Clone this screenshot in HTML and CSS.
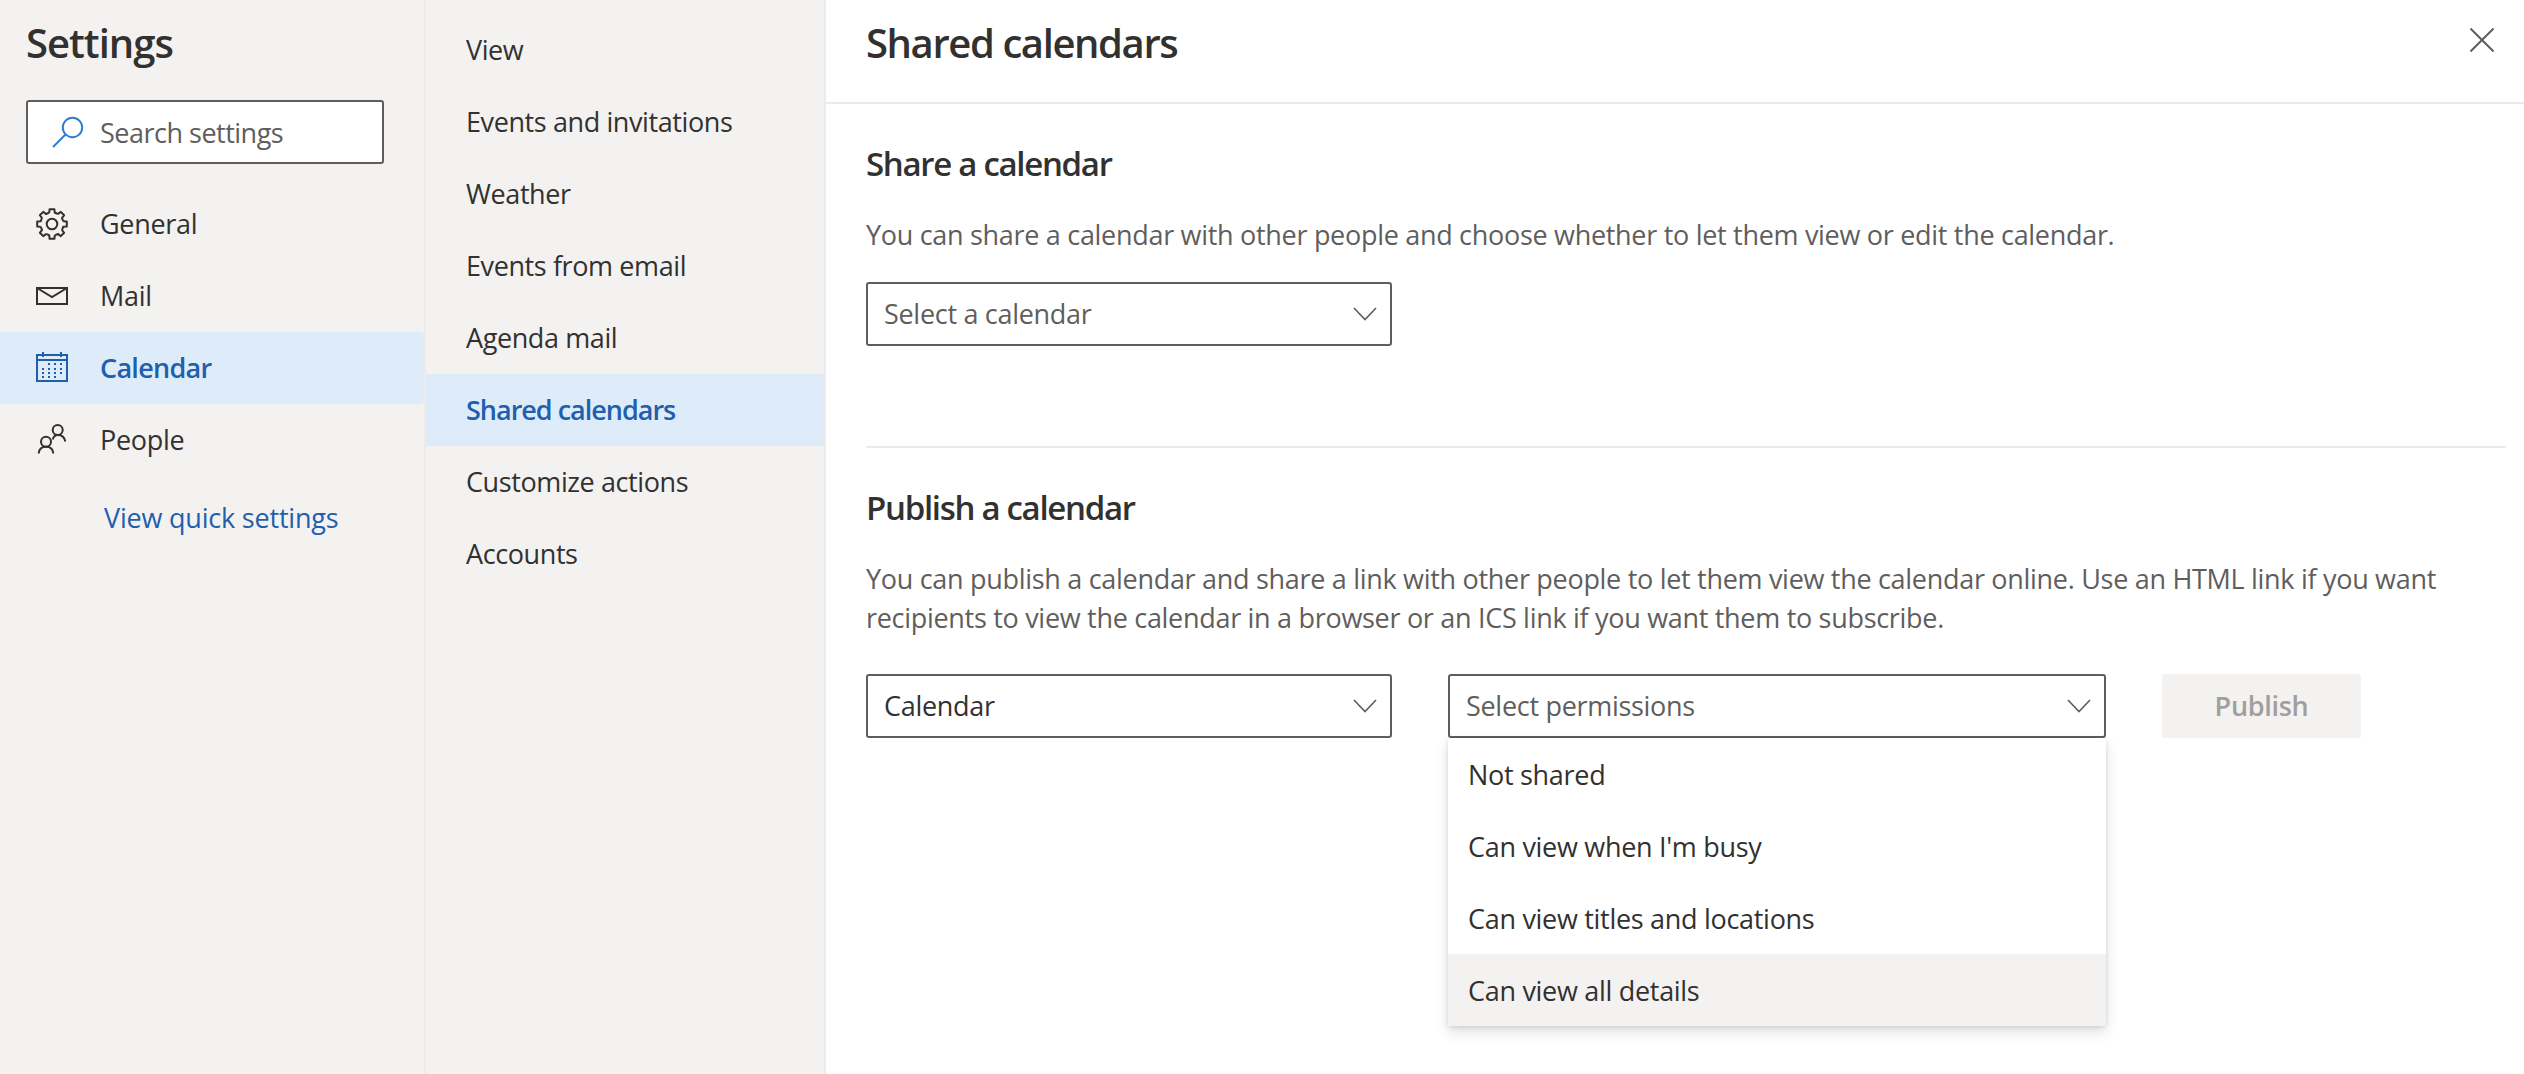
FILE: index.html
```html
<!DOCTYPE html>
<html lang="en">

<head>
    <meta charset="UTF-8">
    <meta name="viewport" content="width=device-width, initial-scale=1.0">
    <title>Shared calendars</title>
    <link rel="stylesheet" href="styles.css">
</head>

<body>

    <div class="settings">
        <!-- first column -->
        <aside class="sidebar">
            <div class="sidebar-title">Settings</div>
            <div class="search">
                <svg class="search-icon" viewBox="0 0 32 32" width="32" height="32">
                    <circle cx="20.5" cy="11.5" r="9.7" fill="none" stroke="#2f7dd3" stroke-width="2"/>
                    <path d="M13.5 18.5 L1 31" fill="none" stroke="#2f7dd3" stroke-width="2"/>
                </svg>
                <span>Search settings</span>
            </div>
            <nav class="main-nav">
                <a class="main-link">
                    <svg class="nav-icon" viewBox="-16 -16 32 32" width="32" height="32" fill="none" stroke="currentColor" stroke-width="2" stroke-linejoin="round">
                        <defs>
                            <path id="tooth" d="M-2.8 -11.2 L-2.4 -14.8 L2.4 -14.8 L2.8 -11.2 A11.5 11.5 0 0 1 5.9 -9.9"/>
                        </defs>
                        <use href="#tooth"/>
                        <use href="#tooth" transform="rotate(45)"/>
                        <use href="#tooth" transform="rotate(90)"/>
                        <use href="#tooth" transform="rotate(135)"/>
                        <use href="#tooth" transform="rotate(180)"/>
                        <use href="#tooth" transform="rotate(225)"/>
                        <use href="#tooth" transform="rotate(270)"/>
                        <use href="#tooth" transform="rotate(315)"/>
                        <circle r="5.3"/>
                    </svg>
                    <span>General</span>
                </a>
                <a class="main-link">
                    <svg class="nav-icon" viewBox="0 0 32 32" width="32" height="32" fill="none" stroke="currentColor" stroke-width="2">
                        <rect x="1" y="8" width="30" height="16"/>
                        <path d="M1 8 L16 17 L31 8"/>
                    </svg>
                    <span>Mail</span>
                </a>
                <a class="main-link active">
                    <svg class="nav-icon" viewBox="0 0 32 32" width="32" height="32" fill="none" stroke="currentColor" stroke-width="2">
                        <rect x="1" y="3" width="30" height="26"/>
                        <path d="M1 8 H31 M7 0 V5 M25 0 V5"/>
                        <path d="M12 12 H14 M18 12 H20 M24 12 H26 M6 17 H8 M12 17 H14 M18 17 H20 M24 17 H26 M6 21 H8 M12 21 H14 M18 21 H20 M24 21 H26 M6 25 H8 M12 25 H14 M18 25 H20"/>
                    </svg>
                    <span>Calendar</span>
                </a>
                <a class="main-link">
                    <svg class="nav-icon" viewBox="0 0 32 32" width="32" height="32" fill="none" stroke="currentColor" stroke-width="2">
                        <circle cx="21.7" cy="6" r="5"/>
                        <circle cx="10" cy="17.7" r="5"/>
                        <path d="M2.7 29.5 C3 25 6 22.7 10 22.7 C14 22.7 17 25 17.3 29.5"/>
                        <path d="M16.7 15.5 C17.5 12.7 19 11 21.7 11 C25.5 11 28.5 13 29.3 17.5"/>
                    </svg>
                    <span>People</span>
                </a>
            </nav>
            <a class="quick-link">View quick settings</a>
        </aside>

        <!-- second column -->
        <nav class="sub-nav">
            <a class="sub-link">View</a>
            <a class="sub-link">Events and invitations</a>
            <a class="sub-link">Weather</a>
            <a class="sub-link">Events from email</a>
            <a class="sub-link">Agenda mail</a>
            <a class="sub-link active">Shared calendars</a>
            <a class="sub-link">Customize actions</a>
            <a class="sub-link">Accounts</a>
        </nav>

        <main class="panel">
            <header class="panel-header">
                <h1>Shared calendars</h1>
                <svg class="close" viewBox="0 0 24 24" width="24" height="24">
                    <path d="M0.5 0.5 L23.5 23.5 M23.5 0.5 L0.5 23.5" stroke="#605e5c" stroke-width="2" fill="none"/>
                </svg>
            </header>

            <div class="panel-body">
                <section class="share">
                    <h2>Share a calendar</h2>
                    <p>You can share a calendar with other people and choose whether to let them view or edit the calendar.</p>
                    <div class="select select-cal placeholder">
                        <span>Select a calendar</span>
                        <svg class="chevron" viewBox="0 0 24 14" width="24" height="14"><path d="M1 1 L12 12.5 L23 1" fill="none" stroke="#605e5c" stroke-width="1.6"/></svg>
                    </div>
                </section>

                <section class="publish">
                    <h2>Publish a calendar</h2>
                    <p>You can publish a calendar and share a link with other people to let them view the calendar online. Use an HTML link if you want recipients to view the calendar in a browser or an ICS link if you want them to subscribe.</p>
                    <div class="publish-row">
                        <div class="select select-cal">
                            <span>Calendar</span>
                            <svg class="chevron" viewBox="0 0 24 14" width="24" height="14"><path d="M1 1 L12 12.5 L23 1" fill="none" stroke="#605e5c" stroke-width="1.6"/></svg>
                        </div>
                        <div class="select select-perm placeholder">
                            <span>Select permissions</span>
                            <svg class="chevron" viewBox="0 0 24 14" width="24" height="14"><path d="M1 1 L12 12.5 L23 1" fill="none" stroke="#605e5c" stroke-width="1.6"/></svg>
                            <ul class="menu">
                                <li>Not shared</li>
                                <li>Can view when I'm busy</li>
                                <li>Can view titles and locations</li>
                                <li class="hover">Can view all details</li>
                            </ul>
                        </div>
                        <button class="publish-btn">Publish</button>
                    </div>
                </section>
            </div>
        </main>
    </div>

</body>

</html>
```

FILE: styles.css
```css
* {
    box-sizing: border-box;
}

body {
    margin: 0;
    font-family: 'Open Sans', 'Noto Sans', sans-serif;
    font-size: 27px;
    letter-spacing: -0.3px;
    color: #323130;
    background-color: #fff;
}

.settings {
    display: flex;
    width: 2524px;
    height: 1074px;
    overflow: hidden;
}

/* first column */
.sidebar {
    width: 426px;
    flex: none;
    background-color: #f3f2f1;
    border-right: 2px solid #edebe9;
}

.sidebar-title {
    height: 100px;
    padding: 14px 0 0 26px;
    font-size: 40px;
    line-height: 58px;
    font-weight: 600;
    letter-spacing: -1px;
}

.search {
    display: flex;
    align-items: center;
    width: 358px;
    height: 64px;
    margin-left: 26px;
    padding-left: 24px;
    gap: 16px;
    background-color: #fff;
    border: 2px solid #605e5c;
    border-radius: 3px;
    color: #605e5c;
    letter-spacing: -0.5px;
}

.main-nav {
    margin-top: 24px;
}

.main-link {
    display: flex;
    align-items: center;
    height: 72px;
    padding-left: 36px;
    gap: 32px;
}

.main-link span {
    margin-top: -2px;
}

.main-link.active {
    width: 424px;
    background-color: #deecf9;
    border-radius: 0 4px 4px 0;
    color: #1f5fad;
    font-weight: 600;
    letter-spacing: -0.7px;
}

.nav-icon {
    flex: none;
}

.quick-link {
    display: block;
    margin-top: 22px;
    padding-left: 104px;
    line-height: 40px;
    color: #1f5fad;
    letter-spacing: -0.2px;
}

/* second column */
.sub-nav {
    display: flex;
    flex-direction: column;
    width: 400px;
    flex: none;
    padding-top: 14px;
    background-color: #f3f2f1;
    border-right: 2px solid #edebe9;
}

.sub-link {
    display: flex;
    align-items: center;
    height: 72px;
    padding: 0 0 2px 40px;
    flex: none;
    letter-spacing: -0.4px;
}

.sub-link.active {
    background-color: #deecf9;
    color: #1f5fad;
    font-weight: 600;
    letter-spacing: -1px;
}

/* right panel */
.panel {
    flex: 1;
    min-width: 0;
}

.panel-header {
    display: flex;
    align-items: flex-start;
    justify-content: space-between;
    height: 104px;
    padding: 14px 30px 0 40px;
    border-bottom: 2px solid #edebe9;
}

.panel-header h1 {
    margin: 0;
    font-size: 40px;
    line-height: 58px;
    font-weight: 600;
    letter-spacing: -1.4px;
}

.close {
    margin-top: 14px;
}

.panel-body {
    padding: 0 18px 0 40px;
}

h2 {
    margin: 0;
    font-size: 33px;
    line-height: 48px;
    font-weight: 600;
    letter-spacing: -1.3px;
}

p {
    margin: 0;
    line-height: 39px;
    color: #605e5c;
}

.share {
    height: 344px;
    padding-top: 36px;
    border-bottom: 2px solid #edebe9;
}

.share p {
    margin-top: 27px;
}

.share .select {
    margin-top: 28px;
}

.publish {
    padding-top: 36px;
}

.publish p {
    margin-top: 27px;
}

.publish-row {
    display: flex;
    margin-top: 37px;
}

.select {
    position: relative;
    display: flex;
    align-items: center;
    justify-content: space-between;
    height: 64px;
    padding: 0 13px 0 16px;
    background-color: #fff;
    border: 2px solid #605e5c;
    border-radius: 3px;
}

.select > span {
    margin-top: -2px;
}

.select.placeholder {
    color: #605e5c;
}

.select-cal {
    width: 526px;
}

.select-perm {
    width: 658px;
    margin-left: 56px;
}

.menu {
    position: absolute;
    top: 62px;
    left: -2px;
    width: 658px;
    margin: 0;
    padding: 0;
    list-style: none;
    background-color: #fff;
    color: #323130;
    border-radius: 3px;
    box-shadow: 0 6px 14px rgba(0, 0, 0, 0.13), 0 1px 4px rgba(0, 0, 0, 0.11);
}

.menu li {
    display: flex;
    align-items: center;
    height: 72px;
    padding-left: 20px;
}

.menu li.hover {
    background-color: #f3f2f1;
}

.publish-btn {
    width: 199px;
    height: 64px;
    margin-left: 56px;
    padding-bottom: 2px;
    background-color: #f3f2f1;
    border: none;
    border-radius: 3px;
    color: #a19f9d;
    font-family: inherit;
    font-size: 27px;
    font-weight: 600;
    letter-spacing: -0.3px;
}
```
